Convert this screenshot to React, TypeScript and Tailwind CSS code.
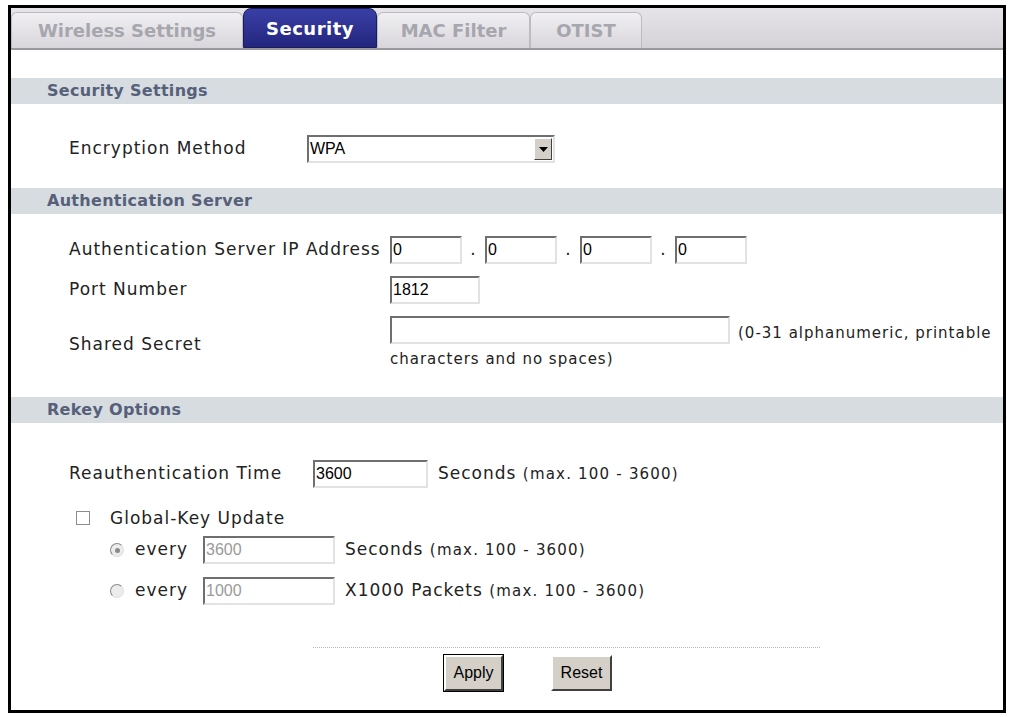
import React from "react";

const sunken =
  "border-2 border-t-[#6f6f6f] border-l-[#6f6f6f] border-b-[#e2e2e2] border-r-[#e2e2e2] bg-white";

function TextBox({
  value,
  w,
  disabled,
}: {
  value?: string;
  w: string;
  disabled?: boolean;
}) {
  return (
    <div
      className={`${sunken} ${w} h-[28px] shrink-0 flex items-center pl-[1px] font-['Liberation_Sans',sans-serif] text-[16px] tracking-normal ${
        disabled ? "text-[#9a9a9a]" : "text-black"
      }`}
    >
      {value}
    </div>
  );
}

function SectionHeader({ title }: { title: string }) {
  return (
    <div className="h-[26px] bg-[#d6dcdf] flex items-center pl-[36px] font-bold text-[16px] tracking-[0.3px] text-[#56607a]">
      {title}
    </div>
  );
}

function Radio({ checked }: { checked?: boolean }) {
  return (
    <span className="w-[14px] h-[14px] shrink-0 rounded-full border border-t-[#8a8a8a] border-l-[#8a8a8a] border-b-[#e0e0e0] border-r-[#e0e0e0] bg-[#ececec] flex items-center justify-center">
      {checked && <span className="w-[5px] h-[5px] rounded-full bg-[#8a8a8a]" />}
    </span>
  );
}

function Tab({
  label,
  w,
  active,
}: {
  label: string;
  w: string;
  active?: boolean;
}) {
  if (active) {
    return (
      <div
        className={`${w} h-[40px] rounded-t-[8px] bg-gradient-to-b from-[#3a3fa6] to-[#23267e] border border-[#1a1c60] flex items-center justify-center text-white font-bold text-[18px] tracking-[0.5px]`}
      >
        {label}
      </div>
    );
  }
  return (
    <div
      className={`${w} h-[36px] rounded-t-[6px] bg-gradient-to-b from-[#f0eff2] to-[#d8d6da] border border-b-0 border-[#bcbbc0] flex items-center justify-center text-[#a6a6ae] font-bold text-[18px]`}
    >
      {label}
    </div>
  );
}

function Range() {
  return <span className="text-[15px] tracking-[1.2px]">(max. 100 - 3600)</span>;
}

export default function App() {
  return (
    <div className="w-[1012px] h-[717px] bg-white overflow-hidden font-['DejaVu_Sans',sans-serif]">
      <div className="ml-[8px] mt-[5px] w-[998px] h-[708px] border-[3px] border-black flex flex-col">
        {/* tabs */}
        <div className="h-[42px] shrink-0 bg-gradient-to-b from-[#e6e4e8] to-[#d4d2d6] border-b-2 border-[#9a9a9e] flex items-end">
          <Tab label="Wireless Settings" w="w-[232px]" />
          <Tab label="Security" w="w-[134px]" active />
          <Tab label="MAC Filter" w="w-[153px]" />
          <Tab label="OTIST" w="w-[112px]" />
        </div>

        <div className="mt-[28px]">
          <SectionHeader title="Security Settings" />
        </div>

        <div className="flex items-center mt-[31px] pl-[58px] text-[17px] tracking-[1px] text-[#222]">
          <span className="w-[238px]">Encryption Method</span>
          <div className={`${sunken} w-[248px] h-[28px] flex items-center justify-between`}>
            <span className="pl-[1px] font-['Liberation_Sans',sans-serif] text-[16px] tracking-normal text-black">
              WPA
            </span>
            <span className="w-[18px] h-[22px] mr-[1px] bg-[#d4d0c8] border border-t-white border-l-white border-b-[#404040] border-r-[#404040] flex items-center justify-center">
              <svg width="9" height="5" viewBox="0 0 9 5">
                <path d="M0 0h9L4.5 5z" fill="#000" />
              </svg>
            </span>
          </div>
        </div>

        <div className="mt-[25px]">
          <SectionHeader title="Authentication Server" />
        </div>

        <div className="pl-[58px] text-[17px] tracking-[1px] text-[#222]">
          <div className="flex items-center mt-[22px]">
            <span className="w-[321px] whitespace-nowrap">Authentication Server IP Address</span>
            <TextBox value="0" w="w-[72px]" />
            <span className="w-[23px] text-center">.</span>
            <TextBox value="0" w="w-[72px]" />
            <span className="w-[23px] text-center">.</span>
            <TextBox value="0" w="w-[72px]" />
            <span className="w-[23px] text-center">.</span>
            <TextBox value="0" w="w-[72px]" />
          </div>
          <div className="flex items-center mt-[12px]">
            <span className="w-[321px]">Port Number</span>
            <TextBox value="1812" w="w-[90px]" />
          </div>
          <div className="flex items-center mt-[12px]">
            <span className="w-[321px] pt-[2px]">Shared Secret</span>
            <div className="flex flex-col">
              <div className="flex items-end">
                <TextBox w="w-[340px]" />
                <span className="ml-[8px] text-[15px] whitespace-nowrap">
                  (0-31 alphanumeric, printable
                </span>
              </div>
              <div className="mt-[4px] text-[15px]">characters and no spaces)</div>
            </div>
          </div>
        </div>

        <div className="mt-[26px]">
          <SectionHeader title="Rekey Options" />
        </div>

        <div className="pl-[58px] text-[17px] tracking-[1px] text-[#222]">
          <div className="flex items-center mt-[37px]">
            <span className="w-[244px]">Reauthentication Time</span>
            <TextBox value="3600" w="w-[115px]" />
            <span className="ml-[10px]">
              Seconds <Range />
            </span>
          </div>
          <div className="flex items-center mt-[18px] pl-[7px]">
            <span className="w-[14px] h-[14px] border border-[#8c8c8c] bg-white" />
            <span className="ml-[20px]">Global-Key Update</span>
          </div>
          <div className="flex items-center mt-[5px] pl-[41px]">
            <Radio checked />
            <span className="ml-[11px] w-[68px]">every</span>
            <TextBox value="3600" w="w-[132px]" disabled />
            <span className="ml-[10px]">
              Seconds <Range />
            </span>
          </div>
          <div className="flex items-center mt-[13px] pl-[41px]">
            <Radio />
            <span className="ml-[11px] w-[68px]">every</span>
            <TextBox value="1000" w="w-[132px]" disabled />
            <span className="ml-[10px]">
              X1000 Packets <Range />
            </span>
          </div>
        </div>

        <div className="ml-[302px] mt-[42px] w-[507px] border-t border-dotted border-[#b8b8b8]" />
        <div className="flex mt-[7px] pl-[433px] gap-[48px] font-['Liberation_Sans',sans-serif] text-[16px] text-black">
          <button className="w-[59px] h-[36px] bg-[#d4d0c8] border-2 border-t-white border-l-white border-b-[#404040] border-r-[#404040] outline outline-1 outline-black">
            Apply
          </button>
          <button className="w-[61px] h-[36px] bg-[#d4d0c8] border-2 border-t-white border-l-white border-b-[#404040] border-r-[#404040]">
            Reset
          </button>
        </div>
      </div>
    </div>
  );
}
